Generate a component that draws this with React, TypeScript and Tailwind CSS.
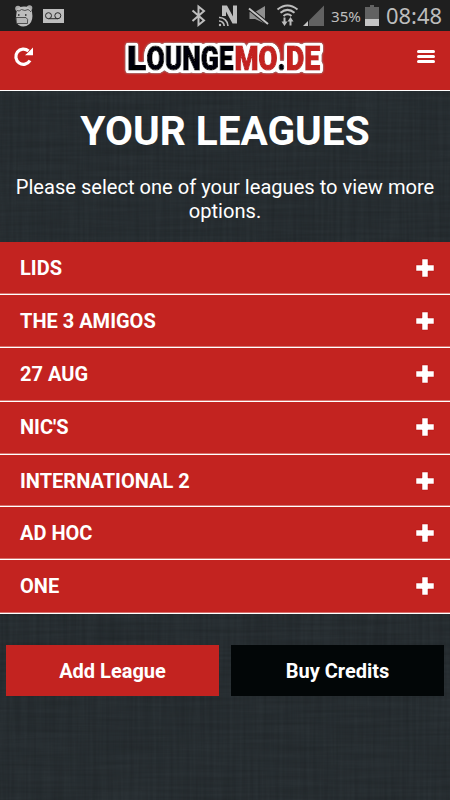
interface LeagueProps {
  name: string
  height: string
}

const leagues: LeagueProps[] = [
  { name: 'LIDS', height: 'h-[53px]' },
  { name: 'THE 3 AMIGOS', height: 'h-[53px]' },
  { name: '27 AUG', height: 'h-[54px] pb-px' },
  { name: "NIC'S", height: 'h-[53px] pb-[2px]' },
  { name: 'INTERNATIONAL 2', height: 'h-[52px]' },
  { name: 'AD HOC', height: 'h-[53px]' },
  { name: 'ONE', height: 'h-[54px] pb-[2px]' },
]

const StatusBar = (): JSX.Element => {
  return (
    <div className="h-[31px] bg-[#1f1f1f]">
      <svg width="450" height="31" viewBox="0 0 450 31" className="block">
        {/* notification face */}
        <circle cx="18" cy="8.500" r="2.800" fill="#a8a8a8" />
        <circle cx="29.500" cy="8" r="2.800" fill="#a8a8a8" />
        <path d="M17 9 Q19 6.500 24 6.500 Q31 6.500 32 12 Q33.500 20 29.500 24 Q24 28.500 18.500 25 Q15 22 16 17 Z" fill="#bdbdbd" />
        <path d="M17 10.500 Q19 12 21.500 9.500 Q25 11.500 28 9.500 Q30 10.500 31 12" fill="none" stroke="#444" strokeWidth=".9" />
        <path d="M16 17.500 H26 Q28.500 18.500 27.500 23.500 H16.500 Z" fill="#b5b5b5" stroke="#333" strokeWidth=".8" />
        <path d="M18 15 h1.500 M25 15 h1.500" stroke="#222" strokeWidth="1.300" />
        {/* voicemail */}
        <rect x="43" y="9" width="21" height="14" fill="#bdbdbd" />
        <g fill="none" stroke="#292929" strokeWidth="1">
          <circle cx="48.500" cy="15.700" r="3" />
          <circle cx="57.800" cy="15.700" r="3" />
          <path d="M48.500 18.700 H58" />
        </g>
        {/* bluetooth */}
        <path d="M192.500 10.500 L204 20.500 L198.500 25 V6.500 L204 11 L192.500 21" fill="none" stroke="#bdbdbd" strokeWidth="2" />
        {/* nfc */}
        <path d="M222 16 V5.500 H227 L233 16.500 V5.500 H237 V23.500 H232.500 L226 11.500 V16 Z" fill="#bdbdbd" />
        <g fill="none" stroke="#bdbdbd" strokeWidth="1.600">
          <path d="M219 17.500 A8.500 8.500 0 0 1 228 26" />
          <path d="M219 21 A5 5 0 0 1 224.200 26" />
        </g>
        <circle cx="220" cy="25" r="1.200" fill="#bdbdbd" />
        {/* muted speaker */}
        <path d="M249.500 12 H255 L265 6 V23.500 L255 19 H249.500 Z" fill="#8f8f8f" />
        <path d="M248 7.700 L268.500 24.300" stroke="#1f1f1f" strokeWidth="4" />
        <path d="M249 8.500 L268 24" stroke="#c5c5c5" strokeWidth="2" />
        {/* wifi */}
        <g fill="none" stroke="#bdbdbd" strokeWidth="2">
          <path d="M277.500 9.500 Q287.500 1.500 297.500 9.500" />
          <path d="M280.500 12.800 Q287.500 7 294.500 12.800" />
          <path d="M283.500 16 Q287.500 12.500 291.500 16" />
        </g>
        <path d="M284.500 17.500 V23 M290.500 20 V25.500" stroke="#bdbdbd" strokeWidth="2" />
        <path d="M281.500 21.500 H287.500 L284.500 26 Z M287.500 21.500 H293.500 L290.500 17 Z" fill="#bdbdbd" />
        {/* signal */}
        <path d="M309 20.500 L324 5.500 V26 H309 Z" fill="#626262" />
        <path d="M303 26 L308 21 V26 Z" fill="#c5c5c5" />
        {/* battery */}
        <path d="M370 5 H374 V7 H379 V20 H365 V7 H370 Z" fill="#626262" />
        <rect x="365" y="19" width="14" height="7" fill="#c5c5c5" />
        <text x="331" y="22" fontSize="15" textLength="30" lengthAdjust="spacingAndGlyphs" fill="#bdbdbd" className="font-['Noto_Sans',sans-serif]">
          35%
        </text>
        <text x="386" y="23.500" fontSize="21.500" textLength="56" lengthAdjust="spacingAndGlyphs" fill="#bdbdbd" className="font-['Noto_Sans',sans-serif]">
          08:48
        </text>
      </svg>
    </div>
  )
}

const Logo = (): JSX.Element => {
  return (
    <svg width="220" height="50" viewBox="0 0 220 50" className="font-['Roboto',sans-serif] font-black">
      {/* white sticker outline with a greyish rim */}
      <filter id="outline" x="-5%" y="-20%" width="110%" height="140%">
        <feMorphology in="SourceAlpha" operator="dilate" radius="2" result="grown" />
        <feGaussianBlur in="grown" stdDeviation="1" result="soft" />
        <feComponentTransfer in="soft" result="wide">
          <feFuncA type="linear" slope="6" intercept="-1.200" />
        </feComponentTransfer>
        <feFlood floodColor="#fff" />
        <feComposite in2="wide" operator="in" result="white" />
        <feGaussianBlur in="wide" stdDeviation="1.300" result="glow" />
        <feComponentTransfer in="glow" result="rim">
          <feFuncA type="linear" slope="1.600" />
        </feComponentTransfer>
        <feFlood floodColor="#9b8a89" />
        <feComposite in2="rim" operator="in" result="grey" />
        <feMerge>
          <feMergeNode in="grey" />
          <feMergeNode in="white" />
          <feMergeNode in="SourceGraphic" />
        </feMerge>
      </filter>
      <text filter="url(#outline)" y="37" fontSize="32.500" strokeWidth="1.200" fill="#020607" stroke="#020607">
        <tspan x="13" fontSize="33.500" textLength="19" lengthAdjust="spacingAndGlyphs">L</tspan>
        <tspan x="32.500" textLength="87" lengthAdjust="spacingAndGlyphs">OUNGE</tspan>
        <tspan x="120.500" textLength="43" lengthAdjust="spacingAndGlyphs" fill="#c32320" stroke="#c32320">MO</tspan>
        <tspan x="163.500" textLength="8" lengthAdjust="spacingAndGlyphs">.</tspan>
        <tspan x="172" textLength="34" lengthAdjust="spacingAndGlyphs" fill="#c32320" stroke="#c32320">DE</tspan>
      </text>
    </svg>
  )
}

const Header = (): JSX.Element => {
  return (
    <header className="h-[60px] bg-[#c32320] border-b border-white flex items-start justify-between pl-[13px] pr-[15px]">
      <svg width="22" height="22" viewBox="0 0 22 22" className="mt-[14px]">
        <path d="M17 15.500 A7.600 7.600 0 1 1 15.500 6" fill="none" stroke="#fff" strokeWidth="3.200" />
        <path d="M20 2.500 V10.300 H12 L14.500 8 L17 5.500 Z" fill="#fff" />
      </svg>
      <div className="mt-[2px] mr-[4px]">
        <Logo />
      </div>
      <div className="mt-[19px] flex flex-col gap-[2px]">
        <span className="block w-[18px] h-[3px] rounded-full bg-white" />
        <span className="block w-[18px] h-[3px] rounded-full bg-white" />
        <span className="block w-[18px] h-[3px] rounded-full bg-white" />
      </div>
    </header>
  )
}

const League = ({ name, height }: LeagueProps): JSX.Element => {
  return (
    <li className={`${height} bg-[#c32320] border-b border-white shadow-[inset_0_-1px_0_#d8706c] flex items-center justify-between pl-5 pr-4`}>
      <span className="text-[20px] leading-6 font-bold text-white">{name}</span>
      <svg width="18" height="18" viewBox="0 0 18 18" className="overflow-visible">
        <path d="M6 0 H12 V6 H18 V12 H12 V18 H6 V12 H0 V6 H6 Z" fill="#fff" stroke="#b50c0c" strokeWidth=".5" />
      </svg>
    </li>
  )
}

// Woven linen made of stretched noise in both directions
const Linen = (): JSX.Element => {
  return (
    <svg width="450" height="800" className="absolute inset-0 -z-10">
      <filter id="warp" x="0" y="0" width="100%" height="100%">
        <feTurbulence type="fractalNoise" baseFrequency="0.3 0.012" numOctaves="2" seed="4" />
        <feColorMatrix values="0 0 0 0 0  0 0 0 0 0  0 0 0 0 0  1 0 0 0 -0.3" />
      </filter>
      <filter id="weft" x="0" y="0" width="100%" height="100%">
        <feTurbulence type="fractalNoise" baseFrequency="0.012 0.3" numOctaves="2" seed="9" />
        <feColorMatrix values="0 0 0 0 0  0 0 0 0 0  0 0 0 0 0  1 0 0 0 -0.3" />
      </filter>
      <rect width="450" height="800" fill="#2a3135" />
      <rect width="450" height="800" filter="url(#warp)" opacity=".2" />
      <rect width="450" height="800" filter="url(#weft)" opacity=".2" />
    </svg>
  )
}

const App = (): JSX.Element => {
  return (
    <div className="relative isolate w-[450px] h-[800px] overflow-hidden font-['Roboto',sans-serif] text-white">
      <Linen />
      <StatusBar />
      <Header />
      <main>
        <div className="h-[151px] pt-[16px] text-center">
          <h1 className="text-[40.6px] leading-[48px] font-bold">YOUR LEAGUES</h1>
          <p className="mt-[20px] px-3 text-[20.1px] leading-[24px]">
            Please select one of your leagues to view more options.
          </p>
        </div>
        <ul>
          {leagues.map((league) => (
            <League key={league.name} name={league.name} height={league.height} />
          ))}
        </ul>
        <div className="mt-[31px] px-[6px] grid grid-cols-2 gap-3">
          <button className="h-[51px] pt-px bg-[#c32320] text-[20px] font-bold">Add League</button>
          <button className="h-[51px] pt-px bg-[#020607] text-[20px] font-bold">Buy Credits</button>
        </div>
      </main>
    </div>
  )
}

export default App
